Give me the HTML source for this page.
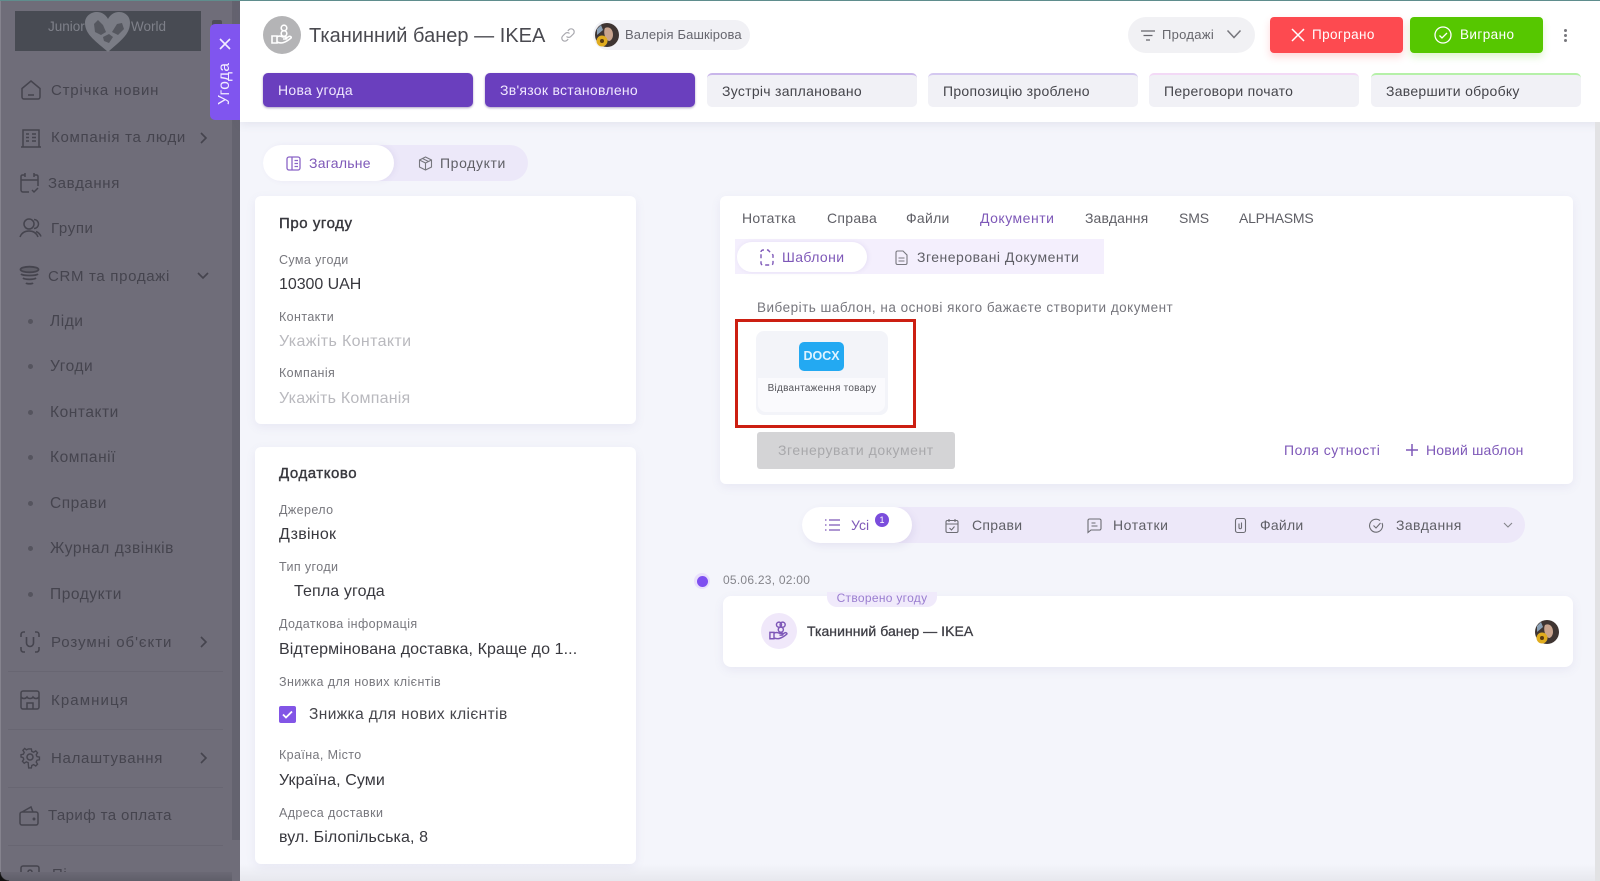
<!DOCTYPE html>
<html lang="uk"><head><meta charset="utf-8"><title>Угода</title>
<style>
*{box-sizing:border-box}
html,body{margin:0;padding:0;width:1600px;height:881px;overflow:hidden}
body{position:relative;background:#f4f5fb;font-family:"Liberation Sans",sans-serif;color:#3d3d44}
.a{position:absolute}
.t{position:absolute;white-space:nowrap;line-height:20px;height:20px;margin-top:-10px}
.side{color:#45444e;font-size:15px;letter-spacing:.62px}
.sub{color:#45444e;font-size:15.5px;letter-spacing:.55px}
.lb{color:#77777d;font-size:12.5px;letter-spacing:.4px}
.vl{color:#38383e;font-size:16px;letter-spacing:.13px}
.ph{color:#b9b9be;font-size:16px;letter-spacing:.36px}
.h{color:#38383e;font-size:15px;letter-spacing:.55px;-webkit-text-stroke:.4px #38383e}
.card{position:absolute;background:#fff;border-radius:6px;box-shadow:0 3px 10px rgba(110,100,170,.09)}
.st{position:absolute;top:73px;height:34px;width:210px;border-radius:5px;font-size:14px;letter-spacing:.28px;padding-left:15px}
.st.on{background:#6a3fbe;color:#f0e8ff;line-height:34px;box-shadow:0 1px 2px rgba(50,20,110,.4)}
.st.off{background:#f1f1f6;color:#45454b;border-top:2px solid #c9b6ea;line-height:32px}
.dot{position:absolute;left:28px;width:5px;height:5px;border-radius:50%;background:#55545e}
.sep{position:absolute;left:8px;width:215px;height:1px;background:#686672}
.tab{font-size:14px;letter-spacing:.28px;color:#5f5f66}
.pur{color:#7e58b8}
svg{position:absolute;overflow:visible;fill:none}
</style></head><body>

<!-- sidebar -->
<div class="a" style="left:0;top:0;width:240px;height:881px;background:#6f6d79"></div>
<div class="a" style="left:0;top:0;width:1px;height:881px;background:#85838e"></div>
<div class="a" style="left:232px;top:0;width:8px;height:840px;background:#64636f"></div>
<div class="a" style="left:0;top:0;width:1600px;height:1px;background:#5f8d8d;z-index:5"></div>
<div class="a" style="left:15px;top:11px;width:186px;height:40px;background:#484b53"></div>
<svg style="left:85px;top:11px" width="46" height="42" viewBox="0 0 46 42"><path d="M23 41C12 31 0 24 0 12 0 5 6 1 12 1c5 0 9 3 11 7 2-4 6-7 11-7 6 0 11 4 11 11 0 12-11 19-22 29z" fill="#7a7c85"/><path d="M9 13l4-4 5 5 3 7-5 3-6-3zM27 21l5-8 5-1 2 6-6 6zM18 26l6-3 4 3-4 6-5-2z" fill="#55575f"/></svg>
<div class="t" style="left:48px;top:27px;font-size:13.5px;color:#7e8089">Junior</div>
<div class="t" style="left:131px;top:27px;font-size:13.5px;color:#7e8089">World</div>
<div class="a" style="left:212px;top:20px;width:10px;height:5px;background:#4f4e58;border-radius:2px 2px 0 0"></div>

<!-- sidebar icons -->
<svg style="left:20px;top:79px" width="22" height="22" viewBox="0 0 22 22" stroke="#45444e" stroke-width="1.5"><path d="M2 9.5L11 2l9 7.5V18a2 2 0 0 1-2 2H4a2 2 0 0 1-2-2z"/><path d="M8 16h6"/></svg>
<div class="t side" style="left:51px;top:91px;letter-spacing:.8px">Стрічка новин</div>

<svg style="left:20px;top:127px" width="22" height="22" viewBox="0 0 22 22" stroke="#45444e" stroke-width="1.5"><path d="M3 20V3h16v17M1 20h20M6 7h3M6 10.5h3M6 14h3M12 7h4M12 10.5h4M12 14h4"/></svg>
<div class="t side" style="left:51px;top:138px;letter-spacing:.7px">Компанія та люди</div>
<svg style="left:199px;top:131px" width="10" height="14" viewBox="0 0 10 14" stroke="#45444e" stroke-width="1.6"><path d="M2 2l5 5-5 5"/></svg>

<svg style="left:19px;top:172px" width="21" height="22" viewBox="0 0 21 22" stroke="#45444e" stroke-width="1.5"><path d="M6 3H3.500A1.500 1.500 0 0 0 2 4.500V18a2 2 0 0 0 2 2h6M15 3h2.500A1.500 1.500 0 0 1 19 4.500V14M2 8h17M6 1v4M15 1v4M13 18l2 2 4-4"/></svg>
<div class="t side" style="left:48px;top:184px">Завдання</div>

<svg style="left:19px;top:217px" width="23" height="22" viewBox="0 0 23 22" stroke="#45444e" stroke-width="1.5"><circle cx="10" cy="7" r="5"/><path d="M15 2.500a4.500 4.500 0 0 1 0 9M1 20c1.500-4 5-6 9-6s7.500 2 9 6M17 14.500c2 .8 4 2.500 5 5"/></svg>
<div class="t side" style="left:51px;top:229px">Групи</div>

<svg style="left:19px;top:265px" width="21" height="22" viewBox="0 0 21 22" stroke="#45444e" stroke-width="1.800"><ellipse cx="10.500" cy="4.500" rx="9" ry="2.800" fill="#45444e" fill-opacity=".35"/><path d="M2 9c2 2 15 2 17 0M4 13c2 1.800 11 1.800 13 0M7 18c1 1 6 1 7 0"/></svg>
<div class="t side" style="left:48px;top:276.500px;letter-spacing:.68px">CRM та продажі</div>
<svg style="left:196px;top:271px" width="14" height="10" viewBox="0 0 14 10" stroke="#45444e" stroke-width="1.600"><path d="M2 2l5 5 5-5"/></svg>

<div class="dot" style="top:319px"></div><div class="t sub" style="left:50px;top:322px">Ліди</div>
<div class="dot" style="top:364px"></div><div class="t sub" style="left:50px;top:367px">Угоди</div>
<div class="dot" style="top:410px"></div><div class="t sub" style="left:50px;top:413px">Контакти</div>
<div class="dot" style="top:455px"></div><div class="t sub" style="left:50px;top:458px">Компанії</div>
<div class="dot" style="top:501px"></div><div class="t sub" style="left:50px;top:504px">Справи</div>
<div class="dot" style="top:546px"></div><div class="t sub" style="left:50px;top:549px">Журнал дзвінків</div>
<div class="dot" style="top:592px"></div><div class="t sub" style="left:50px;top:595px">Продукти</div>

<svg style="left:20px;top:631px" width="20" height="22" viewBox="0 0 20 22" stroke="#45444e" stroke-width="1.600"><path d="M1 6V3.500A2.500 2.500 0 0 1 3.500 1H5M15 1h1.500A2.500 2.500 0 0 1 19 3.500V6M1 16v2.500A2.500 2.500 0 0 0 3.500 21H5M15 21h1.500a2.500 2.500 0 0 0 2.500-2.500V16M6.500 6v6a3.500 3.500 0 0 0 7 0V6"/></svg>
<div class="t side" style="left:51px;top:642.500px;letter-spacing:.95px">Розумні об'єкти</div>
<svg style="left:199px;top:635px" width="10" height="14" viewBox="0 0 10 14" stroke="#45444e" stroke-width="1.600"><path d="M2 2l5 5-5 5"/></svg>
<div class="sep" style="top:671px"></div>

<svg style="left:20px;top:690px" width="20" height="20" viewBox="0 0 20 20" stroke="#45444e" stroke-width="1.500"><rect x="1" y="1" width="18" height="18" rx="2"/><path d="M1 7c1.500 2 4.500 2 6 0 1 2 5 2 6 0 1.500 2 4.500 2 6 0M7 19v-6h6v6"/></svg>
<div class="t side" style="left:51px;top:700.500px;letter-spacing:1.1px">Крамниця</div>
<div class="sep" style="top:729px"></div>

<svg style="left:20px;top:747px" width="20" height="20" viewBox="0 0 20 20" stroke="#45444e" stroke-width="1.500"><circle cx="10" cy="10" r="3"/><path d="M8.500 1h3l.5 2.800 2 .9 2.400-1.500 2 2.100-1.500 2.300.9 2 2.700.5v3l-2.700.5-.9 2 1.500 2.300-2 2.100-2.400-1.500-2 .9-.5 2.800h-3L8 16.300l-2-.9-2.400 1.500-2-2.100 1.500-2.300-.9-2L0 10V7.400l2.700-.5.9-2-1.500-2.300 2-2.100L6 2l2-.9z" transform="translate(1 1) scale(.9)"/></svg>
<div class="t side" style="left:51px;top:758.500px;letter-spacing:.7px">Налаштування</div>
<svg style="left:199px;top:751px" width="10" height="14" viewBox="0 0 10 14" stroke="#45444e" stroke-width="1.600"><path d="M2 2l5 5-5 5"/></svg>
<div class="sep" style="top:787px"></div>

<svg style="left:19px;top:806px" width="20" height="20" viewBox="0 0 20 20" stroke="#45444e" stroke-width="1.500"><path d="M1 8a2 2 0 0 1 2-2h14a2 2 0 0 1 2 2v9a2 2 0 0 1-2 2H3a2 2 0 0 1-2-2zM3 6l9-5 2 5"/><circle cx="15" cy="13" r=".7"/></svg>
<div class="t side" style="left:48px;top:816px;letter-spacing:.42px">Тариф та оплата</div>
<div class="sep" style="top:845px"></div>
<svg style="left:20px;top:865px" width="20" height="17" viewBox="0 0 20 17" stroke="#45444e" stroke-width="1.500"><path d="M1 16V3a2 2 0 0 1 2-2h14a2 2 0 0 1 2 2v13"/><circle cx="10" cy="7" r="2"/></svg>
<div class="t side" style="left:52px;top:875px">Пі</div>
<div class="a" style="left:0;top:872px;width:232px;height:9px;background:linear-gradient(#6b6975,#5f5e69)"></div>
<div class="a" style="left:0;top:872px;width:9px;height:9px;background:radial-gradient(circle at 100% 0,transparent 8px,#111 9px)"></div>

<!-- Угода tab -->
<div class="a" style="left:210px;top:24px;width:30px;height:96px;background:#8055ef;border-radius:5px 0 0 5px;z-index:3"></div>
<svg style="left:219px;top:38px;z-index:4" width="12" height="12" viewBox="0 0 12 12" stroke="#f3edff" stroke-width="1.600"><path d="M1 1l10 10M11 1L1 11"/></svg>
<div class="a" style="left:215px;top:61px;width:20px;height:45px;z-index:4;color:#f3edff;font-size:15.5px;writing-mode:vertical-rl;transform:rotate(180deg);line-height:20px;white-space:nowrap;letter-spacing:.4px;text-align:center">Угода</div>

<!-- header -->
<div class="a" style="left:240px;top:1px;width:1360px;height:121px;background:#fff;box-shadow:0 3px 8px rgba(100,100,140,.1);z-index:1"></div>
<div id="hdr" class="a" style="left:0;top:0;width:1600px;height:122px;z-index:2">
<div class="a" style="left:263px;top:16px;width:38px;height:38px;border-radius:50%;background:#b4b4b6"></div>
<svg style="left:271px;top:24px" width="22" height="22" viewBox="0 0 22 22" stroke="#fff" stroke-width="1.600"><circle cx="13" cy="4" r="2.800"/><circle cx="13" cy="9.500" r="2.800"/><path d="M1 12h5v7H1zM6 13c2-1.500 4-1 6 0h3c1 0 1 2 0 2h-3M6 18c4 2 8 1 14-4 1-1-1-2.500-3-1l-3 2"/></svg>
<div class="t" style="left:309px;top:35.500px;font-size:20px;color:#4a4a50;letter-spacing:.02px">Тканинний банер — IKEA</div>
<svg style="left:560px;top:27px" width="16" height="16" viewBox="0 0 16 16" stroke="#a8a8ae" stroke-width="1.200"><path d="M6.500 9.500a3 3 0 0 0 4.300 0l2.500-2.500a3 3 0 0 0-4.300-4.300L7.800 3.900M9.500 6.500a3 3 0 0 0-4.300 0L2.700 9a3 3 0 0 0 4.300 4.300l1.200-1.200"/></svg>

<div class="a" style="left:593px;top:20px;width:157px;height:30px;border-radius:15px;background:#f1f1f5"></div>
<svg style="left:595px;top:23px" width="24" height="24" viewBox="0 0 24 24"><circle cx="12" cy="12" r="12" fill="#3f3532"/><path d="M10 5c4-2 8 1 8 7 0 3-2 6-4 6-4-1-6-9-4-13z" fill="#c9a48e"/><circle cx="7" cy="18" r="5.500" fill="#e0ac1e"/><circle cx="7" cy="18" r="2" fill="#5a3a10"/><path d="M2 6l4-4 2 5-6 5z" fill="#8aa0b5"/></svg>
<div class="t" style="left:625px;top:35px;font-size:13px;color:#66666e;letter-spacing:.12px">Валерія Башкірова</div>

<div class="a" style="left:1128px;top:17px;width:127px;height:36px;border-radius:18px;background:#f1f1f4"></div>
<svg style="left:1140px;top:29px" width="16" height="13" viewBox="0 0 16 13" stroke="#66666c" stroke-width="1.300"><path d="M1 2h14M3.500 6.500h9M6 11h4"/></svg>
<div class="t" style="left:1162px;top:35px;font-size:13px;color:#66666c;letter-spacing:.3px">Продажі</div>
<svg style="left:1226px;top:29px" width="16" height="11" viewBox="0 0 16 11" stroke="#76767c" stroke-width="1.500"><path d="M1.500 1.500L8 8.500l6.500-7"/></svg>

<div class="a" style="left:1270px;top:17px;width:133px;height:36px;border-radius:4px;background:#fd4a50;box-shadow:0 4px 8px rgba(253,74,80,.22)"></div>
<svg style="left:1291px;top:28px" width="14" height="14" viewBox="0 0 14 14" stroke="#fff" stroke-width="1.500"><path d="M1 1l12 12M13 1L1 13"/></svg>
<div class="t" style="left:1312px;top:35px;font-size:13.500px;color:#fff;letter-spacing:.4px">Програно</div>
<div class="a" style="left:1410px;top:17px;width:133px;height:36px;border-radius:4px;background:#56c700;box-shadow:0 4px 8px rgba(86,199,0,.2)"></div>
<svg style="left:1434px;top:26px" width="18" height="18" viewBox="0 0 18 18" stroke="#fff" stroke-width="1.300"><circle cx="9" cy="9" r="8"/><path d="M5.500 9.500l2.500 2.500 5-5"/></svg>
<div class="t" style="left:1460px;top:35px;font-size:13.500px;color:#fff;letter-spacing:.42px">Виграно</div>
<div class="a" style="left:1564px;top:29px;width:3px;height:3px;border-radius:50%;background:#77777c;box-shadow:0 5px 0 #77777c,0 10px 0 #77777c"></div>

<div class="st on" style="left:263px">Нова угода</div>
<div class="st on" style="left:485px">Зв'язок встановлено</div>
<div class="st off" style="left:707px">Зустріч заплановано</div>
<div class="st off" style="left:928px;border-top-color:#d4c8f0">Пропозицію зроблено</div>
<div class="st off" style="left:1149px;border-top-color:#f3d9f6">Переговори почато</div>
<div class="st off" style="left:1371px;border-top-color:#b5f0a8">Завершити обробку</div>
</div>

<!-- scrollbar + bottom -->
<div class="a" style="left:1595px;top:122px;width:5px;height:759px;background:#e2e2e4;z-index:1"></div>
<div class="a" style="left:240px;top:864px;width:1355px;height:17px;background:linear-gradient(#f4f5fb,#e7e8ee)"></div>

<!-- tabs -->
<div class="a" style="left:263px;top:145px;width:265px;height:36px;border-radius:18px;background:#ece8f9"></div>
<div class="a" style="left:263px;top:145px;width:131px;height:36px;border-radius:18px;background:#fff;box-shadow:2px 0 6px rgba(110,90,170,.08)"></div>
<svg style="left:286px;top:156px" width="15" height="15" viewBox="0 0 15 15" stroke="#8a63c6" stroke-width="1.300"><rect x="1" y="1" width="13" height="13" rx="2"/><path d="M6 1v13M8.500 4.500H12M8.500 7.500H12M8.500 10.500H12"/></svg>
<div class="t pur" style="left:309px;top:163px;font-size:14px;letter-spacing:.25px">Загальне</div>
<svg style="left:418px;top:156px" width="15" height="15" viewBox="0 0 15 15" stroke="#77777e" stroke-width="1.100"><path d="M7.500 1l6 3v7l-6 3-6-3V4zM1.500 4l6 3 6-3M7.500 7v7M4.500 2.500l6 3"/></svg>
<div class="t tab" style="left:440px;top:163px;letter-spacing:.62px">Продукти</div>

<!-- card 1 -->
<div class="card" style="left:255px;top:196px;width:381px;height:228px"></div>
<div class="t h" style="left:279px;top:224px">Про угоду</div>
<div class="t lb" style="left:279px;top:260px">Сума угоди</div>
<div class="t vl" style="left:279px;top:285px;letter-spacing:-.05px">10300 UAH</div>
<div class="t lb" style="left:279px;top:317px">Контакти</div>
<div class="t ph" style="left:279px;top:342px">Укажіть Контакти</div>
<div class="t lb" style="left:279px;top:373px">Компанія</div>
<div class="t ph" style="left:279px;top:399px;letter-spacing:.22px">Укажіть Компанія</div>

<!-- card 2 -->
<div class="card" style="left:255px;top:447px;width:381px;height:417px"></div>
<div class="t h" style="left:279px;top:474px">Додатково</div>
<div class="t lb" style="left:279px;top:510px">Джерело</div>
<div class="t vl" style="left:279px;top:535px;letter-spacing:.25px">Дзвінок</div>
<div class="t lb" style="left:279px;top:567px">Тип угоди</div>
<div class="t vl" style="left:294px;top:592px">Тепла угода</div>
<div class="t lb" style="left:279px;top:624px">Додаткова інформація</div>
<div class="t vl" style="left:279px;top:650px;letter-spacing:.1px">Відтермінована доставка, Краще до 1...</div>
<div class="t lb" style="left:279px;top:682px">Знижка для нових клієнтів</div>
<div class="a" style="left:279px;top:706px;width:17px;height:17px;border-radius:2px;background:#8255e6"></div>
<svg style="left:282px;top:710px" width="11" height="9" viewBox="0 0 11 9" stroke="#fff" stroke-width="1.800"><path d="M1 4.500l3 3 6-6"/></svg>
<div class="t vl" style="left:309px;top:715px;font-size:15.500px;letter-spacing:.4px;color:#45454b">Знижка для нових клієнтів</div>
<div class="t lb" style="left:279px;top:755px">Країна, Місто</div>
<div class="t vl" style="left:279px;top:780.500px;letter-spacing:.1px">Україна, Суми</div>
<div class="t lb" style="left:279px;top:813px">Адреса доставки</div>
<div class="t vl" style="left:279px;top:838px;letter-spacing:.12px">вул. Білопільська, 8</div>

<!-- right card -->
<div class="card" style="left:720px;top:196px;width:853px;height:288px"></div>
<div class="t tab" style="left:742px;top:217.500px">Нотатка</div>
<div class="t tab" style="left:827px;top:217.500px">Справа</div>
<div class="t tab" style="left:906px;top:217.500px">Файли</div>
<div class="t tab pur" style="left:980px;top:217.500px;color:#7e58b8;letter-spacing:.5px">Документи</div>
<div class="t tab" style="left:1085px;top:217.500px;letter-spacing:.1px">Завдання</div>
<div class="t tab" style="left:1179px;top:217.500px;letter-spacing:-.1px">SMS</div>
<div class="t tab" style="left:1239px;top:217.500px;letter-spacing:-.22px">ALPHASMS</div>

<div class="a" style="left:735px;top:239px;width:369px;height:35px;background:#f4effd"></div>
<div class="a" style="left:737px;top:242px;width:130px;height:30px;border-radius:15px;background:#fff;box-shadow:1px 0 5px rgba(110,90,170,.1)"></div>
<svg style="left:760px;top:249px" width="14" height="17" viewBox="0 0 14 17" stroke="#7e58b8" stroke-width="1.400" stroke-dasharray="4 3"><path d="M1 3a2 2 0 0 1 2-2h5l5 5v8a2 2 0 0 1-2 2H3a2 2 0 0 1-2-2z"/></svg>
<div class="t pur" style="left:782px;top:257px;font-size:14px;letter-spacing:.4px">Шаблони</div>
<svg style="left:895px;top:250px" width="13" height="15" viewBox="0 0 13 15" stroke="#77777e" stroke-width="1.100"><path d="M1 2.500A1.500 1.500 0 0 1 2.500 1H8l4 4v8a1.500 1.500 0 0 1-1.500 1.500h-8A1.500 1.500 0 0 1 1 13zM3.500 8h6M3.500 11h6"/></svg>
<div class="t tab" style="left:917px;top:257px;letter-spacing:.5px">Згенеровані Документи</div>

<div class="t" style="left:757px;top:308px;font-size:13.500px;color:#76767d;letter-spacing:.49px">Виберіть шаблон, на основі якого бажаєте створити документ</div>

<div class="a" style="left:756px;top:331px;width:132px;height:84px;border-radius:8px;background:#f3f4f9;overflow:hidden"><div class="a" style="left:2px;top:47px;width:127px;height:34px;background:#fafafd;border-radius:0 0 8px 8px"></div></div>
<div class="a" style="left:799px;top:342px;width:45px;height:29px;border-radius:5px;background:#23a9f2;color:#dff3ff;font-size:12.500px;font-weight:bold;text-align:center;line-height:29px;letter-spacing:0">DOCX</div>
<div class="t" style="left:756px;top:389px;width:132px;text-align:center;font-size:10px;color:#56565c;letter-spacing:.25px">Відвантаження товару</div>
<div class="a" style="left:735px;top:319px;width:181px;height:109px;border:3px solid #cc1f12"></div>

<div class="a" style="left:757px;top:432px;width:198px;height:37px;border-radius:3px;background:#d4d4d6"></div>
<div class="t" style="left:778px;top:450px;font-size:14px;color:#a8a8ab;letter-spacing:.55px">Згенерувати документ</div>
<div class="t pur" style="left:1284px;top:450px;font-size:14px;letter-spacing:.52px">Поля сутності</div>
<svg style="left:1406px;top:444px" width="12" height="12" viewBox="0 0 12 12" stroke="#7e58b8" stroke-width="1.500"><path d="M6 0v12M0 6h12"/></svg>
<div class="t pur" style="left:1426px;top:450px;font-size:14px;letter-spacing:.2px">Новий шаблон</div>

<!-- segment -->
<div class="a" style="left:802px;top:507px;width:723px;height:36px;border-radius:18px;background:#ede8f9"></div>
<div class="a" style="left:802px;top:507px;width:110px;height:36px;border-radius:18px;background:#fff;box-shadow:2px 3px 8px rgba(110,90,170,.1)"></div>
<svg style="left:824px;top:518px" width="16" height="14" viewBox="0 0 16 14" stroke="#7e58b8" stroke-width="1.300"><path d="M5 2h11M5 7h11M5 12h11M1 2h1.500M1 7h1.500M1 12h1.500"/></svg>
<div class="t pur" style="left:851px;top:525px;font-size:14px">Усі</div>
<div class="a" style="left:875px;top:513px;width:14px;height:14px;border-radius:50%;background:#7a4ddc;color:#fff;font-size:9px;line-height:14px;text-align:center">1</div>
<svg style="left:945px;top:518px" width="14" height="15" viewBox="0 0 14 15" stroke="#6c6c73" stroke-width="1.100"><rect x="1" y="2.500" width="12" height="12" rx="1.500"/><path d="M1 6h12M4 1v3M10 1v3M4.500 10l2 2 3-3.500"/></svg>
<div class="t tab" style="left:972px;top:525px;letter-spacing:.3px">Справи</div>
<svg style="left:1087px;top:518px" width="15" height="15" viewBox="0 0 15 15" stroke="#6c6c73" stroke-width="1.100"><path d="M1 2.500A1.500 1.500 0 0 1 2.500 1h10A1.500 1.500 0 0 1 14 2.500v8a1.500 1.500 0 0 1-1.500 1.500H4l-3 2.500zM4.500 5h4M4.500 8h6"/></svg>
<div class="t tab" style="left:1113px;top:525px;letter-spacing:.55px">Нотатки</div>
<svg style="left:1235px;top:518px" width="11" height="15" viewBox="0 0 11 15" stroke="#6c6c73" stroke-width="1.100"><rect x=".5" y=".5" width="10" height="14" rx="2"/><path d="M6.500 4.500v5a1 1 0 0 1-2.500 0V5.500"/></svg>
<div class="t tab" style="left:1260px;top:525px;letter-spacing:.25px">Файли</div>
<svg style="left:1369px;top:518px" width="15" height="15" viewBox="0 0 15 15" stroke="#6c6c73" stroke-width="1.100"><path d="M13 5a6.500 6.500 0 1 1-2-2.500M4.500 7.500l2.500 2.500 4.500-5"/></svg>
<div class="t tab" style="left:1396px;top:525px;letter-spacing:.4px">Завдання</div>
<svg style="left:1503px;top:522px" width="10" height="7" viewBox="0 0 10 7" stroke="#85858b" stroke-width="1.100"><path d="M1 1l4 4 4-4"/></svg>

<!-- timeline -->
<div class="a" style="left:694px;top:573px;width:16px;height:16px;border-radius:50%;background:#e9e0fb"></div>
<div class="a" style="left:696.500px;top:575.500px;width:11px;height:11px;border-radius:50%;background:#7e4ff0"></div>
<div class="t" style="left:723px;top:580px;font-size:12px;color:#85858b;letter-spacing:.25px">05.06.23, 02:00</div>
<div class="card" style="left:723px;top:596px;width:850px;height:71px;border-radius:8px"></div>
<div class="a" style="left:827px;top:592px;width:110px;height:15px;border-radius:0 0 10px 10px;background:#f0eafb"></div>
<div class="t pur" style="left:827px;top:598px;width:110px;text-align:center;font-size:12px;letter-spacing:.3px;color:#9a7dd0">Створено угоду</div>
<div class="a" style="left:761px;top:613px;width:36px;height:36px;border-radius:50%;background:#f0e8fa"></div>
<svg style="left:769px;top:621px" width="20" height="20" viewBox="0 0 22 22" stroke="#7e58b8" stroke-width="1.600"><circle cx="11" cy="4" r="2.800"/><circle cx="15" cy="4" r="2.800"/><circle cx="13" cy="9.500" r="2.800"/><path d="M1 12.500h4.500v7H1zM5.500 13.500c2-1.500 4-1 6 0h3c1 0 1 2 0 2h-3M5.500 18.500c4 2 8 1 14-4 1-1-1-2.500-3-1l-3 2"/></svg>
<div class="t" style="left:807px;top:631px;font-size:14px;color:#3e3e45;letter-spacing:.05px;-webkit-text-stroke:.3px #3e3e45">Тканинний банер — IKEA</div>
<svg style="left:1535px;top:620px" width="24" height="24" viewBox="0 0 24 24"><circle cx="12" cy="12" r="12" fill="#3f3532"/><path d="M10 5c4-2 8 1 8 7 0 3-2 6-4 6-4-1-6-9-4-13z" fill="#c9a48e"/><circle cx="7" cy="18" r="5.500" fill="#e0ac1e"/><circle cx="7" cy="18" r="2" fill="#5a3a10"/><path d="M2 6l4-4 2 5-6 5z" fill="#8aa0b5"/></svg>

</body></html>
